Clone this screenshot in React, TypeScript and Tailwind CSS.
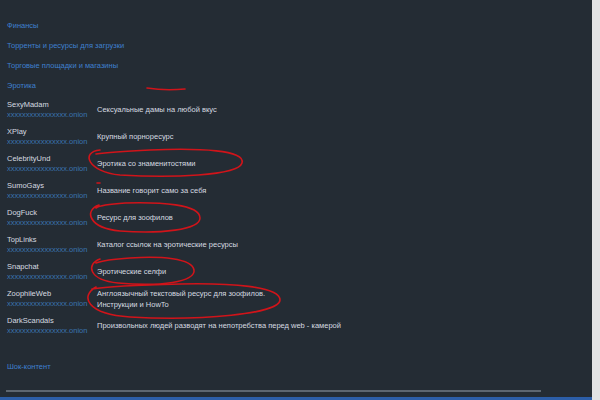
import React from "react";

const rows = [
  { name: "SexyMadam", desc: ["Сексуальные дамы на любой вкус"] },
  { name: "XPlay", desc: ["Крупный порноресурс"] },
  { name: "CelebrityUnd", desc: ["Эротика со знаменитостями"] },
  { name: "SumoGays", desc: ["Название говорит само за себя"] },
  { name: "DogFuck", desc: ["Ресурс для зоофилов"] },
  { name: "TopLinks", desc: ["Каталог ссылок на эротические ресурсы"] },
  { name: "Snapchat", desc: ["Эротические селфи"] },
  { name: "ZoophileWeb", desc: ["Англоязычный текстовый ресурс для зоофилов.", "Инструкции и HowTo"] },
  { name: "DarkScandals", desc: ["Произвольных людей разводят на непотребства перед web - камерой"] },
];

export default function App() {
  return (
    <div
      className="relative w-[600px] h-[400px] overflow-hidden bg-[#242c34] flex"
      style={{ fontFamily: '"Liberation Sans", Arial, sans-serif' }}
    >
      <div className="w-[592px] h-full flex flex-col">
        <div className="flex-1 flex flex-col pl-[7px] pt-[20px]">
          <div className="flex flex-col gap-[9px] text-[7.5px] leading-[11px] text-[#3f80cf]">
            <div>Финансы</div>
            <div>Торренты и ресурсы для загрузки</div>
            <div>Торговые площадки и магазины</div>
            <div>Эротика</div>
          </div>
          <div className="flex flex-col mt-[5px]">
            {rows.map((r) => (
              <div key={r.name} className="flex items-center h-[27px]">
                <div className="w-[90px] flex flex-col text-[7.5px] leading-[10px]">
                  <span className="text-[#d6dbe0]">{r.name}</span>
                  <span className="text-[#3a74b0]">xxxxxxxxxxxxxxxx.onion</span>
                </div>
                <div className="flex flex-col text-[7.5px] leading-[11px] text-[#d6dbe0]">
                  {r.desc.map((d) => (
                    <span key={d}>{d}</span>
                  ))}
                </div>
              </div>
            ))}
          </div>
          <div className="mt-[22px] text-[7.5px] leading-[11px] text-[#3f80cf]">Шок-контент</div>
        </div>
        <div className="pl-[6px] pb-[5px]">
          <div className="w-[535px] h-[2px] bg-[#5d6670]" />
        </div>
        <div className="h-[3px] bg-[#2c5ea8]" />
      </div>
      <div className="w-[8px] h-full bg-[#e2e3e4]" />

      <svg className="absolute left-0 top-0 pointer-events-none" width="600" height="400" viewBox="0 0 600 400">
        <g fill="none" stroke="#d0141a" strokeWidth="1.6" strokeLinecap="round">
          <path d="M147 88 Q165 91 185 89" />
          <path d="M97 183 l3 0" />
          <path d="M100 150 C80 152 88 172 120 175 C170 178 238 176 242 163 C246 150 200 148 150 150 C130 151 110 152 96 154" />
          <path d="M99 205 C84 210 88 228 120 231 C160 234 200 230 200 218 C200 204 160 202 125 203 C110 204 100 205 96 208" />
          <path d="M100 259 C86 264 88 280 118 283 C160 287 196 282 194 270 C192 258 160 256 130 258 C115 259 104 260 96 263" />
          <path d="M96 287 C80 296 86 314 130 317 C200 321 280 314 280 300 C280 286 230 283 180 284 C140 285 110 286 92 289" />
        </g>
      </svg>
    </div>
  );
}
